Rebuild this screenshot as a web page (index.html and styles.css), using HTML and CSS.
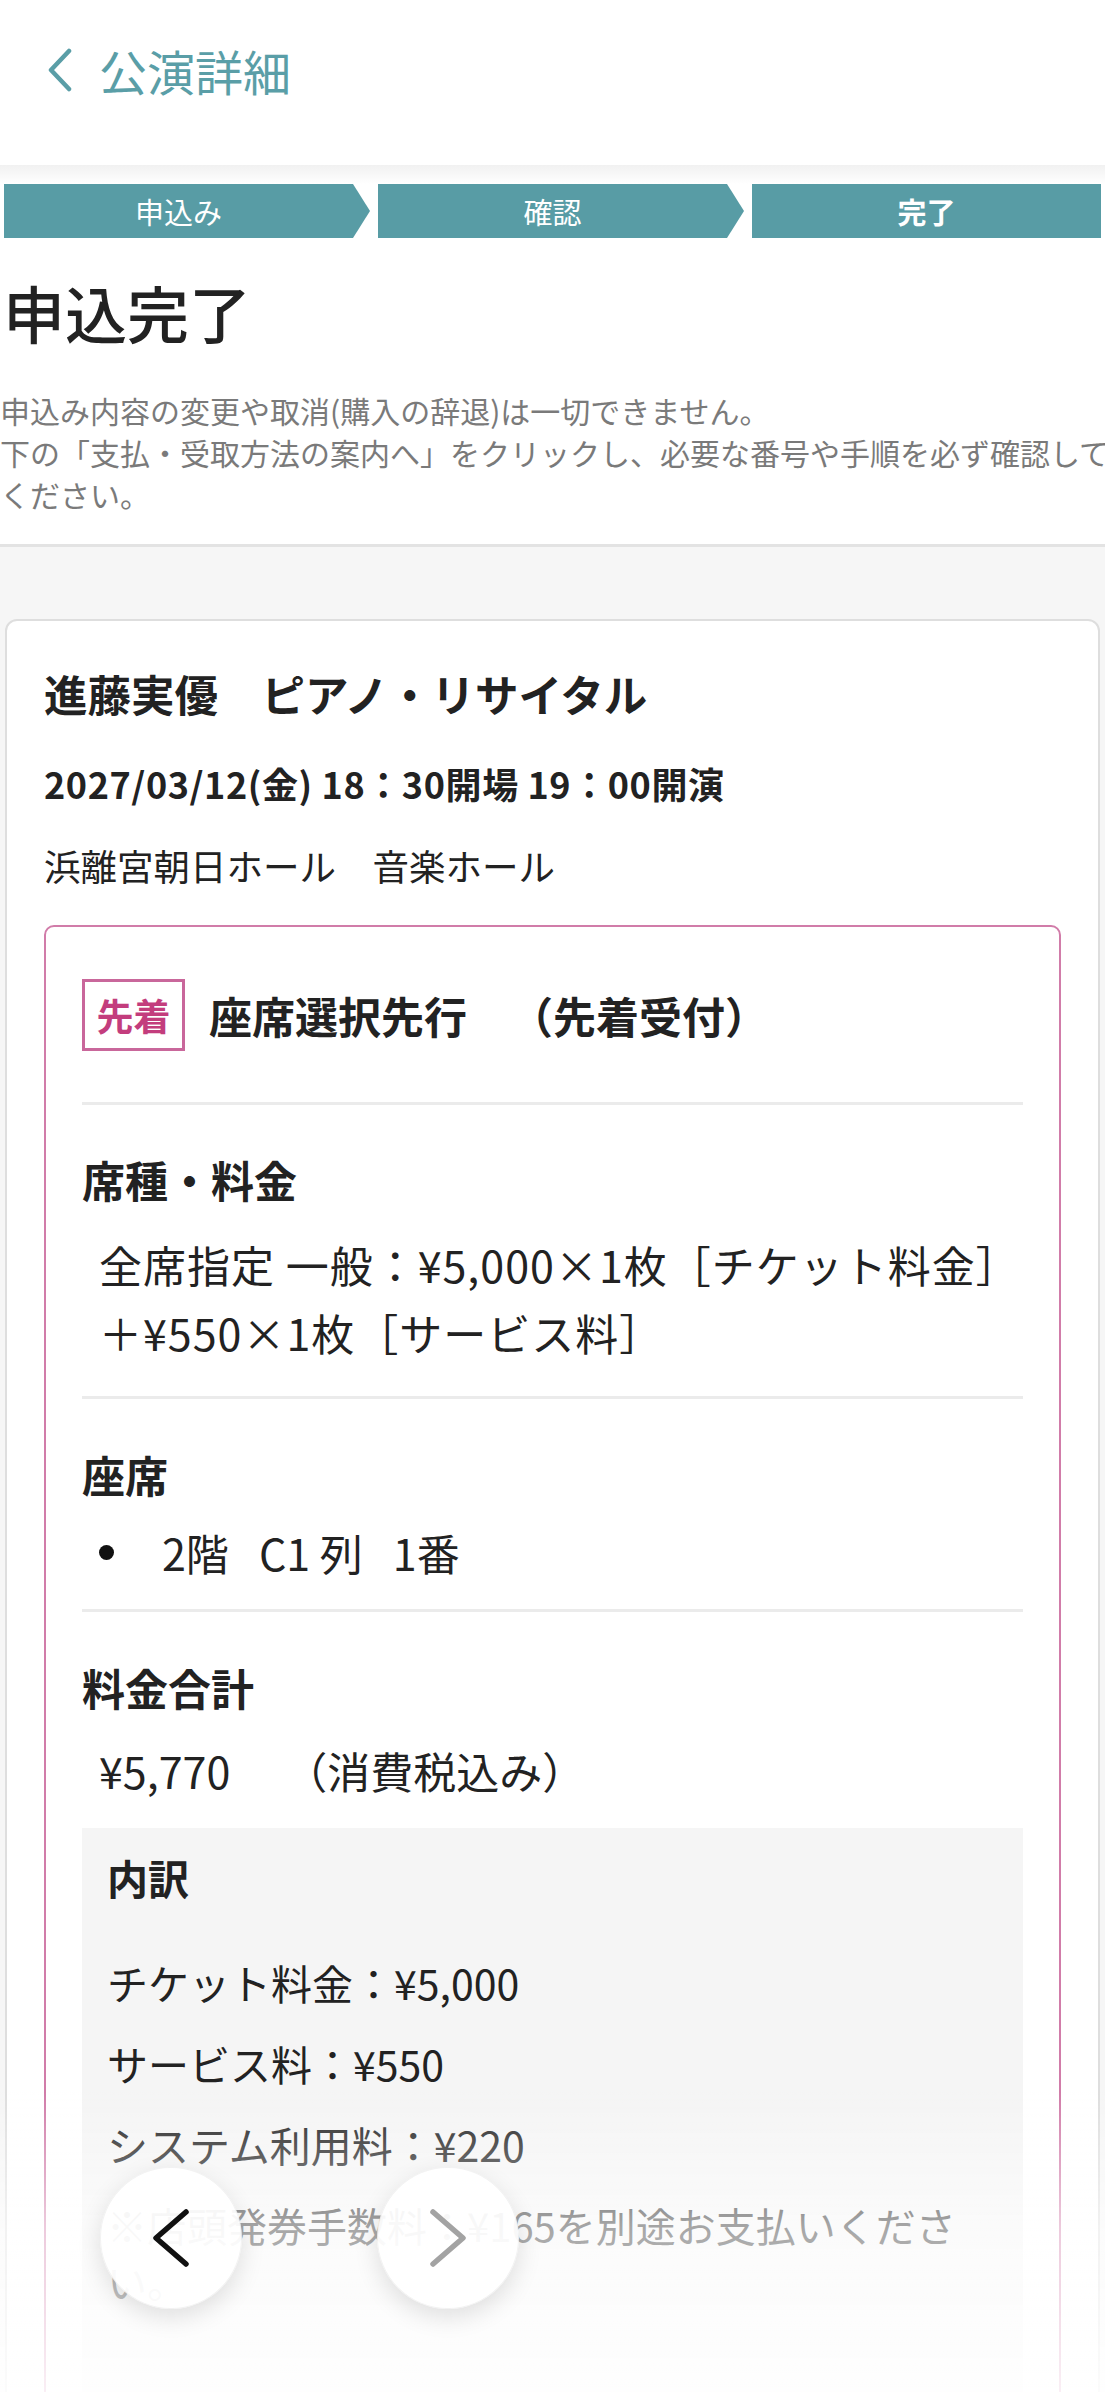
FILE: index.html
```html
<!DOCTYPE html>
<html lang="ja">
<head>
    <meta charset="UTF-8">
    <meta name="viewport" content="width=device-width, initial-scale=1.0">
    <title>申込完了</title>
    <link rel="stylesheet" href="styles.css">
</head>
<body>
    <header class="topbar">
        <a class="back" href="#">
            <svg class="back-icon" width="26" height="44" viewBox="0 0 26 44"><path d="M22 3 L4 22 L22 41" fill="none" stroke="#5a9ea7" stroke-width="4.5" stroke-linecap="round" stroke-linejoin="round"/></svg>
            <span>公演詳細</span>
        </a>
    </header>
    <div class="steps">
        <div class="step arrow">申込み</div>
        <div class="step arrow">確認</div>
        <div class="step current">完了</div>
    </div>
    <section class="intro">
        <h1>申込完了</h1>
        <p class="notice">申込み内容の変更や取消(購入の辞退)は一切できません。<br>下の「支払・受取方法の案内へ」をクリックし、必要な番号や手順を必ず確認して<br>ください。</p>
    </section>
    <main class="content">
        <div class="card">
            <h2 class="event-title">進藤実優　ピアノ・リサイタル</h2>
            <p class="event-date">2027/03/12(金) 18：30開場 19：00開演</p>
            <p class="venue">浜離宮朝日ホール　音楽ホール</p>
            <div class="entry">
                <div class="entry-head">
                    <span class="badge">先着</span>
                    <span>座席選択先行　（先着受付）</span>
                </div>
                <div class="block">
                    <h3>席種・料金</h3>
                    <p class="price-line">全席指定 一般：¥5,000×1枚［チケット料金］<br>＋¥550×1枚［サービス料］</p>
                </div>
                <div class="block seat">
                    <h3>座席</h3>
                    <ul class="seat-list">
                        <li><span>2階</span><span>C1 列</span><span>1番</span></li>
                    </ul>
                </div>
                <div class="block total">
                    <h3>料金合計</h3>
                    <p class="total-line">¥5,770<span class="tax">（消費税込み）</span></p>
                    <div class="breakdown">
                        <h4>内訳</h4>
                        <p>チケット料金：¥5,000</p>
                        <p>サービス料：¥550</p>
                        <p>システム利用料：¥220</p>
                        <p class="fee-note">※店頭発券手数料：¥165を別途お支払いください。</p>
                    </div>
                </div>
            </div>
        </div>
    </main>
    <div class="fade"></div>
    <div class="toolbar">
        <button class="nav-btn">
            <svg width="40" height="60" viewBox="0 0 40 60"><path d="M35 4 L5 30 L35 56" fill="none" stroke="#111" stroke-width="5.5" stroke-linecap="round" stroke-linejoin="round"/></svg>
        </button>
        <button class="nav-btn">
            <svg width="40" height="60" viewBox="0 0 40 60"><path d="M5 4 L35 30 L5 56" fill="none" stroke="#a3a3a3" stroke-width="5.5" stroke-linecap="round" stroke-linejoin="round"/></svg>
        </button>
    </div>
</body>
</html>
```

FILE: styles.css
```css
body {
    margin: 0;
    height: 2392px;
    overflow: hidden;
    background-color: #f6f6f6;
    color: #222;
    font-family: "Noto Sans CJK JP", "Noto Sans", sans-serif;
    text-spacing-trim: space-all;
}
.topbar {
    box-sizing: border-box;
    height: 165px;
    padding: 38px 0 0 47px;
    background-color: #fff;
}
.back {
    display: flex;
    align-items: center;
    gap: 26px;
    color: #5a9ea7;
    font-size: 48px;
    line-height: 64px;
    text-decoration: none;
}
.steps {
    display: flex;
    gap: 8px;
    padding: 19px 4px 0 4px;
    background: linear-gradient(#f1f1f1, #fff 19px);
}
.step {
    box-sizing: border-box;
    height: 54px;
    display: flex;
    align-items: center;
    justify-content: center;
    background-color: #589ca5;
    color: #fff;
    font-size: 29px;
}
.arrow {
    width: 366px;
    padding-right: 17px;
    clip-path: polygon(0 0, 349px 0, 100% 50%, 349px 100%, 0 100%);
}
.current {
    flex: 1;
    font-weight: 700;
}
.intro {
    padding: 38px 0 29px 0;
    background-color: #fff;
    border-bottom: 3px solid #e3e3e3;
}
h1 {
    margin: 0 0 41px 0;
    padding-left: 3px;
    font-size: 62px;
    line-height: 72px;
    font-weight: 500;
}
.notice {
    margin: 0;
    font-size: 30px;
    line-height: 42px;
    color: #7a7a7a;
    white-space: nowrap;
}
.content {
    padding: 72px 5px 0 5px;
}
.card {
    padding: 43px 37px 0 37px;
    background-color: #fff;
    border: 2px solid #dedede;
    border-radius: 12px;
}
.event-title {
    margin: 0;
    font-size: 43.5px;
    line-height: 59px;
    font-weight: 700;
}
.event-date {
    margin: 36px 0 0 0;
    font-size: 36px;
    line-height: 48px;
    font-weight: 700;
    letter-spacing: 0.6px;
}
.venue {
    margin: 34px 0 0 0;
    font-size: 36.5px;
    line-height: 50px;
}
.entry {
    margin-top: 34px;
    padding: 52px 36px 0 36px;
    border: 2px solid #d17ca9;
    border-radius: 10px;
}
.entry-head {
    display: flex;
    align-items: center;
    gap: 24px;
    padding-bottom: 51px;
    border-bottom: 3px solid #ebebeb;
    font-size: 43px;
    font-weight: 700;
}
.badge {
    box-sizing: border-box;
    width: 103px;
    height: 72px;
    display: flex;
    align-items: center;
    justify-content: center;
    border: 3px solid #c9679b;
    color: #c33d7d;
    font-size: 37px;
}
.block {
    padding: 46px 0 30px 0;
    border-bottom: 3px solid #ebebeb;
}
h3 {
    margin: 0;
    font-size: 43px;
    line-height: 56px;
    font-weight: 700;
}
.price-line {
    margin: 23px 0 0 0;
    padding-left: 17px;
    font-size: 43px;
    line-height: 68px;
    letter-spacing: 1px;
}
.seat {
    padding: 47px 0 23px 0;
}
.seat-list {
    margin: 16px 0 0 0;
    padding: 0 0 0 17px;
    list-style: none;
    font-size: 43px;
    line-height: 68px;
}
.seat-list li {
    display: flex;
    align-items: center;
    gap: 30px;
}
.seat-list li::before {
    content: "";
    width: 15px;
    height: 15px;
    margin-right: 18px;
    border-radius: 50%;
    background-color: #111;
}
.total {
    padding: 47px 0 0 0;
    border-bottom: none;
}
.total-line {
    margin: 21px 0 0 0;
    padding-left: 17px;
    font-size: 43px;
    line-height: 68px;
}
.tax {
    margin-left: 54px;
}
.breakdown {
    margin-top: 24px;
    padding: 21px 25px 240px 25px;
    background-color: #f5f5f5;
}
.breakdown h4 {
    margin: 0 0 49px 0;
    font-size: 41px;
    line-height: 56px;
    font-weight: 700;
}
.breakdown p {
    margin: 25px 0 0 0;
    font-size: 41px;
    line-height: 56px;
}
.breakdown .fee-note {
    font-size: 40px;
}
.fade {
    position: fixed;
    left: 0;
    right: 0;
    bottom: 0;
    height: 300px;
    background: linear-gradient(rgba(255, 255, 255, 0), rgba(255, 255, 255, 0.6) 45%, rgba(255, 255, 255, 0.88));
    pointer-events: none;
}
.toolbar {
    position: fixed;
    left: 100px;
    bottom: 83px;
    display: flex;
    gap: 135px;
}
.nav-btn {
    width: 142px;
    height: 142px;
    display: flex;
    align-items: center;
    justify-content: center;
    padding: 0;
    border: 1px solid rgba(0, 0, 0, 0.05);
    border-radius: 50%;
    background-color: rgba(255, 255, 255, 0.92);
    box-shadow: 0 8px 24px rgba(0, 0, 0, 0.12);
}
```
